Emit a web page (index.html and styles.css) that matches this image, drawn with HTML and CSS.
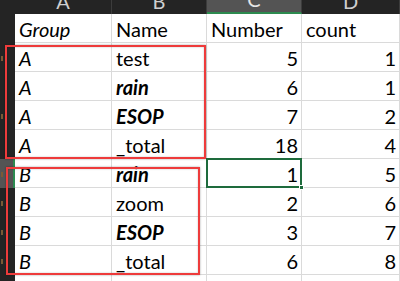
FILE: index.html
```html
<!DOCTYPE html>
<html>
<head>
<meta charset="utf-8">
<link rel="stylesheet" href="styles.css">
</head>
<body>
<div class="sheet">
  <div class="grid">
    <div class="corner"></div>
    <div class="colhead"><span>A</span></div>
    <div class="colhead"><span>B</span></div>
    <div class="colhead active"><span>C</span></div>
    <div class="colhead"><span>D</span></div>

    <div class="rowhead"></div>
    <div class="cell it">Group</div><div class="cell">Name</div><div class="cell">Number</div><div class="cell">count</div>

    <div class="rowhead"><i class="speck"></i></div>
    <div class="cell it">A</div><div class="cell">test</div><div class="cell num">5</div><div class="cell num">1</div>

    <div class="rowhead"></div>
    <div class="cell it">A</div><div class="cell bi">rain</div><div class="cell num">6</div><div class="cell num">1</div>

    <div class="rowhead"><i class="speck"></i></div>
    <div class="cell it">A</div><div class="cell bi">ESOP</div><div class="cell num">7</div><div class="cell num">2</div>

    <div class="rowhead"></div>
    <div class="cell it">A</div><div class="cell">_total</div><div class="cell num">18</div><div class="cell num">4</div>

    <div class="rowhead active"><i class="speck"></i></div>
    <div class="cell it">B</div><div class="cell bi">rain</div><div class="cell num selected">1</div><div class="cell num">5</div>

    <div class="rowhead"><i class="speck"></i></div>
    <div class="cell it">B</div><div class="cell">zoom</div><div class="cell num">2</div><div class="cell num">6</div>

    <div class="rowhead"><i class="speck"></i></div>
    <div class="cell it">B</div><div class="cell bi">ESOP</div><div class="cell num">3</div><div class="cell num">7</div>

    <div class="rowhead"><i class="speck"></i></div>
    <div class="cell it">B</div><div class="cell">_total</div><div class="cell num">6</div><div class="cell num">8</div>

    <div class="rowhead"></div>
    <div class="cell"></div><div class="cell"></div><div class="cell"></div><div class="cell"></div>
  </div>
  <div class="mark mark-a"></div>
  <div class="mark mark-b"></div>
</div>
</body>
</html>
```

FILE: styles.css
```css
html, body {
  margin: 0;
  padding: 0;
  background: #ffffff;
}
.sheet {
  position: relative;
  width: 400px;
  height: 281px;
  overflow: hidden;
  font-family: Lato, "Open Sans", sans-serif;
}
.grid {
  display: grid;
  grid-template-columns: 15px 97px 95px 95px 98px;
  grid-template-rows: 14px repeat(10, 29px);
}
.corner {
  background: #242424;
}
.colhead {
  background: #242424;
  color: #cfcfcf;
  font-size: 20px;
  display: flex;
  justify-content: center;
  align-items: flex-end;
  overflow: hidden;
  border-right: 1px solid #3c3c3c;
  box-sizing: border-box;
  line-height: 1;
}
.colhead span {
  margin-bottom: 3px;
}
.colhead.active {
  background: #545454;
  color: #e6e6e6;
  border-bottom: 2px solid #2c8a4f;
}
.rowhead {
  background: #242424;
  position: relative;
}
.rowhead.active {
  background: #545454;
  border-right: 2px solid #2c8a4f;
}
.speck {
  position: absolute;
  left: 1px;
  top: 13px;
  width: 2px;
  height: 5px;
  background: #7a5a36;
}
.cell {
  box-sizing: border-box;
  border-right: 1px solid #dadada;
  border-bottom: 1px solid #dadada;
  display: flex;
  align-items: flex-end;
  padding: 0 3px 3px 4px;
  font-size: 20px;
  line-height: 1;
  color: #000000;
  white-space: nowrap;
  position: relative;
}
.cell.it {
  font-style: italic;
}
.cell.bi {
  font-style: italic;
  font-weight: bold;
}
.cell.num {
  justify-content: flex-end;
}
.selected::after {
  content: "";
  position: absolute;
  left: -1px;
  top: -1px;
  right: -1px;
  bottom: -1px;
  border: 2px solid #1e6b3c;
}
.selected::before {
  content: "";
  position: absolute;
  right: -3px;
  bottom: -3px;
  width: 5px;
  height: 5px;
  background: #1e6b3c;
  border: 1px solid #ffffff;
  box-sizing: border-box;
  z-index: 2;
}
.mark {
  position: absolute;
  border: 2px solid #ee3b3b;
  box-shadow: 0 0 2px rgba(0, 0, 0, 0.35), inset 0 0 2px rgba(0, 0, 0, 0.25);
}
.mark-a {
  left: 5px;
  top: 45px;
  width: 197px;
  height: 110px;
}
.mark-b {
  left: 6px;
  top: 167px;
  width: 190px;
  height: 104px;
}
```
